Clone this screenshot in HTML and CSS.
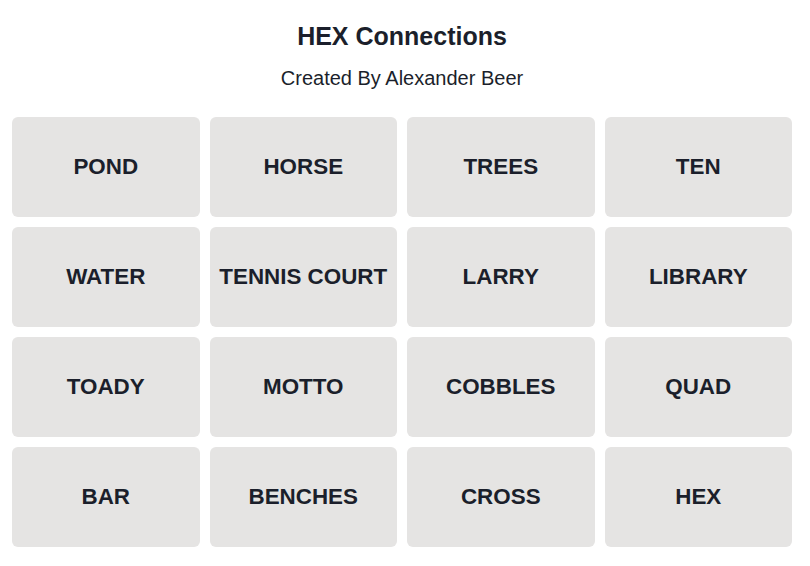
FILE: index.html
```html
<!DOCTYPE html>
<html lang="en">
<head>
<meta charset="utf-8">
<title>HEX Connections</title>
<link rel="stylesheet" href="styles.css">
</head>
<body>
<header class="header">
  <h1 class="title">HEX Connections</h1>
  <p class="subtitle">Created By Alexander Beer</p>
</header>
<main class="grid">
  <div class="tile">POND</div>
  <div class="tile">HORSE</div>
  <div class="tile">TREES</div>
  <div class="tile">TEN</div>
  <div class="tile">WATER</div>
  <div class="tile">TENNIS COURT</div>
  <div class="tile">LARRY</div>
  <div class="tile">LIBRARY</div>
  <div class="tile">TOADY</div>
  <div class="tile">MOTTO</div>
  <div class="tile">COBBLES</div>
  <div class="tile">QUAD</div>
  <div class="tile">BAR</div>
  <div class="tile">BENCHES</div>
  <div class="tile">CROSS</div>
  <div class="tile">HEX</div>
</main>
</body>
</html>
```

FILE: styles.css
```css
html, body {
  margin: 0;
  padding: 0;
  background: #ffffff;
}

body {
  font-family: "Liberation Sans", Arial, sans-serif;
  color: #1b1f2b;
}

.header {
  margin-left: 12px;
  width: 780px;
  padding-top: 22px;
  text-align: center;
}

.title {
  margin: 0 0 16px;
  font-size: 25px;
  font-weight: 700;
  line-height: normal;
}

.subtitle {
  margin: 0 0 27px;
  font-size: 20px;
  line-height: normal;
}

.grid {
  margin-left: 12px;
  width: 780px;
  display: grid;
  grid-template-columns: repeat(4, 1fr);
  grid-auto-rows: 100px;
  gap: 10px;
}

.tile {
  background: #e5e4e3;
  border-radius: 6px;
  display: flex;
  align-items: center;
  justify-content: center;
  font-size: 22.4px;
  font-weight: 700;
  white-space: nowrap;
}
```
